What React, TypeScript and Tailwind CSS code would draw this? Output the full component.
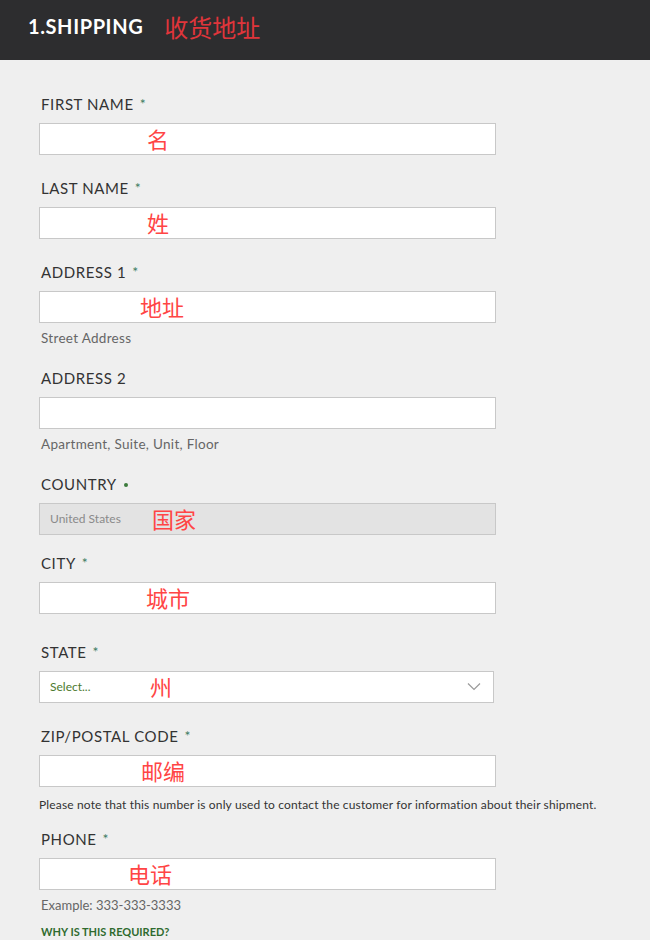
import React from 'react'

type FieldProps = {
  label:    string
  mark?:    'star' | 'dot' | 'none'
  cn?:      string
  cnPad:    string
  top:      string
  variant?: 'text' | 'disabled' | 'select'
  helper?:  string
}

const FONT = "font-['Lato','Noto_Sans',sans-serif]"
const CN = "font-['Noto_Sans_CJK_SC',sans-serif]"

function Field({ label, mark = 'star', cn, cnPad, top, variant = 'text', helper }: FieldProps) {
  return (
    <div className={top}>
      <div className="h-5 flex items-center pl-[2px] text-[15px] text-[#333333] tracking-[0.6px]">
        <span>{label}</span>
        {mark === 'star' && (
          <span className="ml-[6px] text-[14px] text-[#3e7d62] -mt-[2px]">*</span>
        )}
        {mark === 'dot' && (
          <span className="ml-[7px] w-[4px] h-[4px] rounded-full bg-[#3b7b3b] mt-[2px]" />
        )}
      </div>
      <div
        className={`mt-[9px] h-[32px] border border-[#c8c8c8] flex items-center relative ${
          variant === 'disabled' ? 'bg-[#e3e3e3] w-[457px]' : variant === 'select' ? 'bg-white w-[455px]' : 'bg-white w-[457px]'
        }`}
      >
        {variant === 'disabled' && (
          <span className="absolute left-[10px] text-[12px] text-[#8a8a8a]">United States</span>
        )}
        {variant === 'select' && (
          <span className="absolute left-[10px] text-[12px] text-[#4d7a2f]">Select...</span>
        )}
        <span className={`${CN} ${cnPad} -mt-[2px] text-[22px] leading-none text-[#ff4545]`}>{cn}</span>
        {variant === 'select' && (
          <svg className="absolute right-[12px] top-[10px]" width="14" height="9" viewBox="0 0 14 9">
            <path d="M1 1.5 L7 7.5 L13 1.5" fill="none" stroke="#9a9a9a" strokeWidth="1.2" />
          </svg>
        )}
      </div>
      {helper && (
        <p className="mt-[7px] pl-[2px] h-4 leading-4 text-[13.5px] tracking-[0.3px] text-[#666666]">{helper}</p>
      )}
    </div>
  )
}

export default function App() {
  return (
    <div className={`w-[650px] min-h-[940px] bg-[#efefef] ${FONT}`}>
      {/* Header */}
      <div className="h-[60px] bg-[#2d2d2f] flex items-center pl-[28px]">
        <span className="text-white text-[20px] font-bold tracking-[0.6px] -mt-[8px]">1.SHIPPING</span>
        <span className={`${CN} ml-[21px] text-[24px] text-[#e0353b] -mt-[6px]`}>收货地址</span>
      </div>

      <div className="pl-[39px] pb-4">
        <Field label="FIRST NAME" cn="名" cnPad="pl-[107px]" top="mt-[34px]" />
        <Field label="LAST NAME" cn="姓" cnPad="pl-[107px]" top="mt-[23px]" />
        <Field label="ADDRESS 1" cn="地址" cnPad="pl-[100px]" top="mt-[23px]" helper="Street Address" />
        <Field label="ADDRESS 2" mark="none" cnPad="pl-[100px]" top="mt-[22px]" helper="Apartment, Suite, Unit, Floor" />
        <Field label="COUNTRY" mark="dot" cn="国家" cnPad="pl-[112px]" top="mt-[22px]" variant="disabled" />
        <Field label="CITY" cn="城市" cnPad="pl-[106px]" top="mt-[18px]" />
        <Field label="STATE" cn="州" cnPad="pl-[110px]" top="mt-[28px]" variant="select" />
        <Field label="ZIP/POSTAL CODE" cn="邮编" cnPad="pl-[101px]" top="mt-[23px]" />

        <p className="mt-[10px] h-4 leading-4 text-[12px] tracking-[0.15px] text-[#333333]">
          Please note that this number is only used to contact the customer for information about their shipment.
        </p>

        <Field label="PHONE" cn="电话" cnPad="pl-[88px]" top="mt-[16px]" />
        <p className="mt-[7px] pl-[2px] h-4 leading-4 text-[13px] text-[#666666]">Example: 333-333-3333</p>
        <p className="mt-[11px] pl-[2px] text-[11px] font-bold text-[#2f6b2f]">WHY IS THIS REQUIRED?</p>
      </div>
    </div>
  )
}
